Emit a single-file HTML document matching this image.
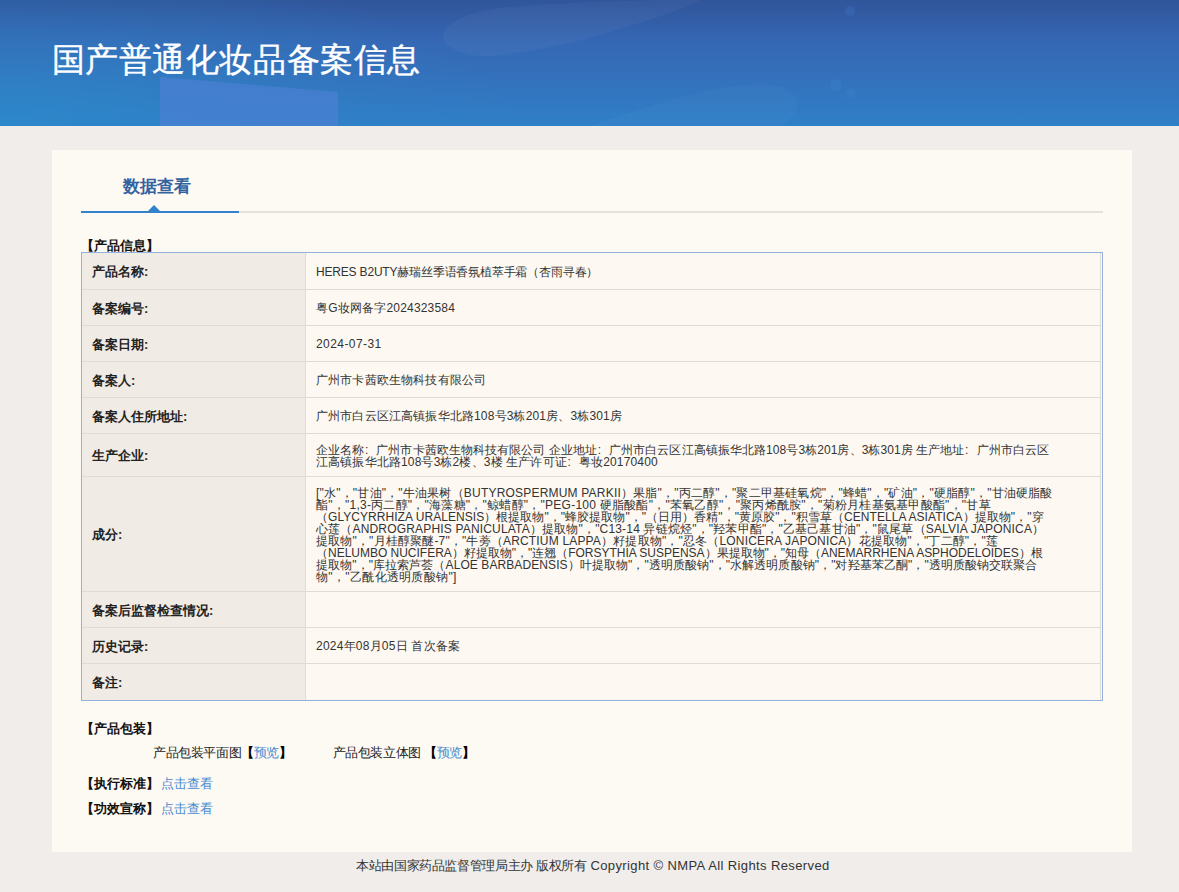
<!DOCTYPE html>
<html><head><meta charset="utf-8">
<style>
*{margin:0;padding:0;box-sizing:border-box}
html,body{width:1179px;height:892px;overflow:hidden}
body{background:#f0edea;font-family:"Liberation Sans",sans-serif;color:#333;position:relative}
#hd{position:absolute;left:0;top:0;width:1179px;height:126px;overflow:hidden;
 background:#3168b0}
#hd svg{position:absolute;left:0;top:0}
#title{-webkit-text-stroke:0.35px #fff;position:absolute;left:51.5px;top:38px;letter-spacing:0.6px;font-size:33px;line-height:44px;color:#fff;white-space:nowrap}
#card{position:absolute;left:52px;top:150px;width:1080px;height:702px;background:#fdf9f3}
#tab{position:absolute;left:122.5px;top:176px;font-size:17px;line-height:22px;font-weight:bold;color:#33629f;white-space:nowrap}
#tabline{position:absolute;left:81px;top:211px;width:1022px;height:2px;background:#e6e1dc}
#tabblue{position:absolute;left:81px;top:211px;width:157.5px;height:2px;background:#3382cc}
#tri{position:absolute;left:148px;top:205px;width:0;height:0;border-left:6px solid transparent;border-right:6px solid transparent;border-bottom:6px solid #3382cc}
.sec{position:absolute;font-size:13px;line-height:16px;font-weight:bold;color:#111;white-space:nowrap}
#tbl{position:absolute;left:81px;top:252px;width:1022px;height:449px;border:1px solid #93b1dc;background:#fdf9f2}
.row{position:absolute;left:0;width:1019px;border-bottom:1px solid #e0dbd5}
.lab{position:absolute;left:0;top:0;width:224px;height:100%;background:#f0ebe5;border-right:1px solid #e0dbd5;font-size:13px;font-weight:bold;color:#222;padding-left:10px;padding-top:1px;white-space:nowrap}
.val{position:absolute;left:224px;top:0;width:795px;border-right:1px solid #e0dbd5;height:100%;font-size:12px;color:#333;padding-left:10px;padding-top:1px;white-space:nowrap}
.ml{line-height:12px}
.ln{height:12px;white-space:nowrap}
.co{display:inline-block;width:1em;padding-left:.05em;font-style:normal}
.lab .co{padding-left:0}
.lk,.txt.lk{color:#4a8bd0}
.txt{position:absolute;font-size:13px;line-height:16px;color:#222;white-space:nowrap}
.txt b{color:#000}
#ft{position:absolute;left:356px;top:858px;font-size:13px;line-height:16px;color:#333;white-space:nowrap}
</style></head><body>
<div id="hd">
<svg width="1179" height="126" viewBox="0 0 1179 126">
 <defs>
  <linearGradient id="g1" x1="0" y1="0" x2="0" y2="1">
   <stop offset="0" stop-color="#30559a"/>
   <stop offset="0.33" stop-color="#3567b4"/>
   <stop offset="0.6" stop-color="#3470bb"/>
   <stop offset="1" stop-color="#2f80c8"/>
  </linearGradient>
  <radialGradient id="g2" cx="0" cy="126" r="1" gradientUnits="userSpaceOnUse" gradientTransform="translate(0,126) scale(520,165) translate(0,-126)">
   <stop offset="0" stop-color="#2c8acb" stop-opacity="0.8"/>
   <stop offset="0.6" stop-color="#2e84c6" stop-opacity="0.3"/>
   <stop offset="1" stop-color="#2e84c6" stop-opacity="0"/>
  </radialGradient>
 </defs>
 <rect width="1179" height="126" fill="url(#g1)"/>
 <rect width="1179" height="126" fill="url(#g2)"/>
 
 <polygon points="160,77 338,92 338,126 160,126" fill="#4a80d2" opacity="0.75"/>
 <path d="M452,48 C430,36 450,14 500,8 C560,2 640,0 700,0 L690,6 C620,30 560,50 490,56 C470,57 458,52 452,48 Z" fill="#ffffff" opacity="0.035"/>
 <path d="M590,126 C640,110 700,86 760,84 C800,84 810,110 780,126 Z" fill="#ffffff" opacity="0.025"/>
 <circle cx="850" cy="11" r="5" fill="#4a90e0" opacity="0.18"/>
 <circle cx="836" cy="85" r="6" fill="#4a90e0" opacity="0.18"/>
 <circle cx="851" cy="93" r="5" fill="#4a90e0" opacity="0.18"/>
</svg>
<div id="title">国产普通化妆品备案信息</div>
</div>
<div id="card"></div>
<div id="tab">数据查看</div>
<div id="tabline"></div><div id="tabblue"></div><div id="tri"></div>
<div class="sec" style="left:80.5px;top:237.5px">【产品信息】</div>
<div id="tbl">
 <div class="row" style="top:0;height:37px"><div class="lab" style="line-height:36px">产品名称<i class="co">:</i></div><div class="val" style="line-height:36px;letter-spacing:-0.185px">HERES B2UTY赫瑞丝季语香氛植萃手霜（杏雨寻春）</div></div>
 <div class="row" style="top:37px;height:36px"><div class="lab" style="line-height:35px">备案编号<i class="co">:</i></div><div class="val" style="line-height:35px;letter-spacing:0.187px">粤G妆网备字2024323584</div></div>
 <div class="row" style="top:73px;height:36px"><div class="lab" style="line-height:35px">备案日期<i class="co">:</i></div><div class="val" style="line-height:35px;letter-spacing:0.433px">2024-07-31</div></div>
 <div class="row" style="top:109px;height:36px"><div class="lab" style="line-height:35px">备案人<i class="co">:</i></div><div class="val" style="line-height:35px;letter-spacing:0.154px">广州市卡茜欧生物科技有限公司</div></div>
 <div class="row" style="top:145px;height:36px"><div class="lab" style="line-height:35px">备案人住所地址<i class="co">:</i></div><div class="val" style="line-height:35px;letter-spacing:0.155px">广州市白云区江高镇振华北路108号3栋201房、3栋301房</div></div>
 <div class="row" style="top:181px;height:43px"><div class="lab" style="line-height:42px">生产企业<i class="co">:</i></div><div class="val ml" style="padding-top:10px"><!--P--><div class="ln" style="letter-spacing:0.076px">企业名称<i class="co">:</i>广州市卡茜欧生物科技有限公司 企业地址<i class="co">:</i>广州市白云区江高镇振华北路108号3栋201房、3栋301房 生产地址<i class="co">:</i>广州市白云区</div><div class="ln" style="letter-spacing:0.147px">江高镇振华北路108号3栋2楼、3楼 生产许可证<i class="co">:</i>粤妆20170400</div><!--/P--></div></div>
 <div class="row" style="top:224px;height:115px"><div class="lab" style="line-height:114px">成分<i class="co">:</i></div><div class="val ml" style="padding-top:10px"><!--I--><div class="ln" style="letter-spacing:0.200px">["水"，"甘油"，"牛油果树（BUTYROSPERMUM PARKII）果脂"，"丙二醇"，"聚二甲基硅氧烷"，"蜂蜡"，"矿油"，"硬脂醇"，"甘油硬脂酸</div><div class="ln" style="letter-spacing:0.243px">酯"，"1,3-丙二醇"，"海藻糖"，"鲸蜡醇"，"PEG-100 硬脂酸酯"，"苯氧乙醇"，"聚丙烯酰胺"，"菊粉月桂基氨基甲酸酯"，"甘草</div><div class="ln" style="letter-spacing:0.049px">（GLYCYRRHIZA URALENSIS）根提取物"，"蜂胶提取物"，"（日用）香精"，"黄原胶"，"积雪草（CENTELLA ASIATICA）提取物"，"穿</div><div class="ln" style="letter-spacing:0.173px">心莲（ANDROGRAPHIS PANICULATA）提取物"，"C13-14 异链烷烃"，"羟苯甲酯"，"乙基己基甘油"，"鼠尾草（SALVIA JAPONICA）</div><div class="ln" style="letter-spacing:0.173px">提取物"，"月桂醇聚醚-7"，"牛蒡（ARCTIUM LAPPA）籽提取物"，"忍冬（LONICERA JAPONICA）花提取物"，"丁二醇"，"莲</div><div class="ln" style="letter-spacing:-0.014px">（NELUMBO NUCIFERA）籽提取物"，"连翘（FORSYTHIA SUSPENSA）果提取物"，"知母（ANEMARRHENA ASPHODELOIDES）根</div><div class="ln" style="letter-spacing:0.087px">提取物"，"库拉索芦荟（ALOE BARBADENSIS）叶提取物"，"透明质酸钠"，"水解透明质酸钠"，"对羟基苯乙酮"，"透明质酸钠交联聚合</div><div class="ln" style="letter-spacing:0.331px">物"，"乙酰化透明质酸钠"]</div><!--/I--></div></div>
 <div class="row" style="top:339px;height:36px"><div class="lab" style="line-height:35px">备案后监督检查情况<i class="co">:</i></div><div class="val"></div></div>
 <div class="row" style="top:375px;height:36px"><div class="lab" style="line-height:35px">历史记录<i class="co">:</i></div><div class="val" style="line-height:35px;letter-spacing:0.227px">2024年08月05日 首次备案</div></div>
 <div class="row" style="top:411px;height:36px;border-bottom:none"><div class="lab" style="line-height:36px">备注<i class="co">:</i></div><div class="val"></div></div>
</div>
<div class="sec" style="left:80.5px;top:720.5px">【产品包装】</div>
<div class="txt" style="left:153px;top:744.5px;letter-spacing:-0.4px">产品包装平面图<b>【</b><span class="lk">预览</span><b>】</b></div>
<div class="txt" style="left:332.5px;top:744.5px;letter-spacing:-0.4px">产品包装立体图 <b>【</b><span class="lk">预览</span><b>】</b></div>
<div class="sec" style="left:80.5px;top:776px">【执行标准】</div>
<div class="txt lk" style="left:161px;top:776px">点击查看</div>
<div class="sec" style="left:80.5px;top:801px">【功效宣称】</div>
<div class="txt lk" style="left:161px;top:801px">点击查看</div>
<div id="ft"><span style="letter-spacing:-0.36px">本站由国家药品监督管理局主办 版权所有</span> <span style="letter-spacing:0.387px">Copyright © NMPA All Rights Reserved</span></div>
</body></html>
